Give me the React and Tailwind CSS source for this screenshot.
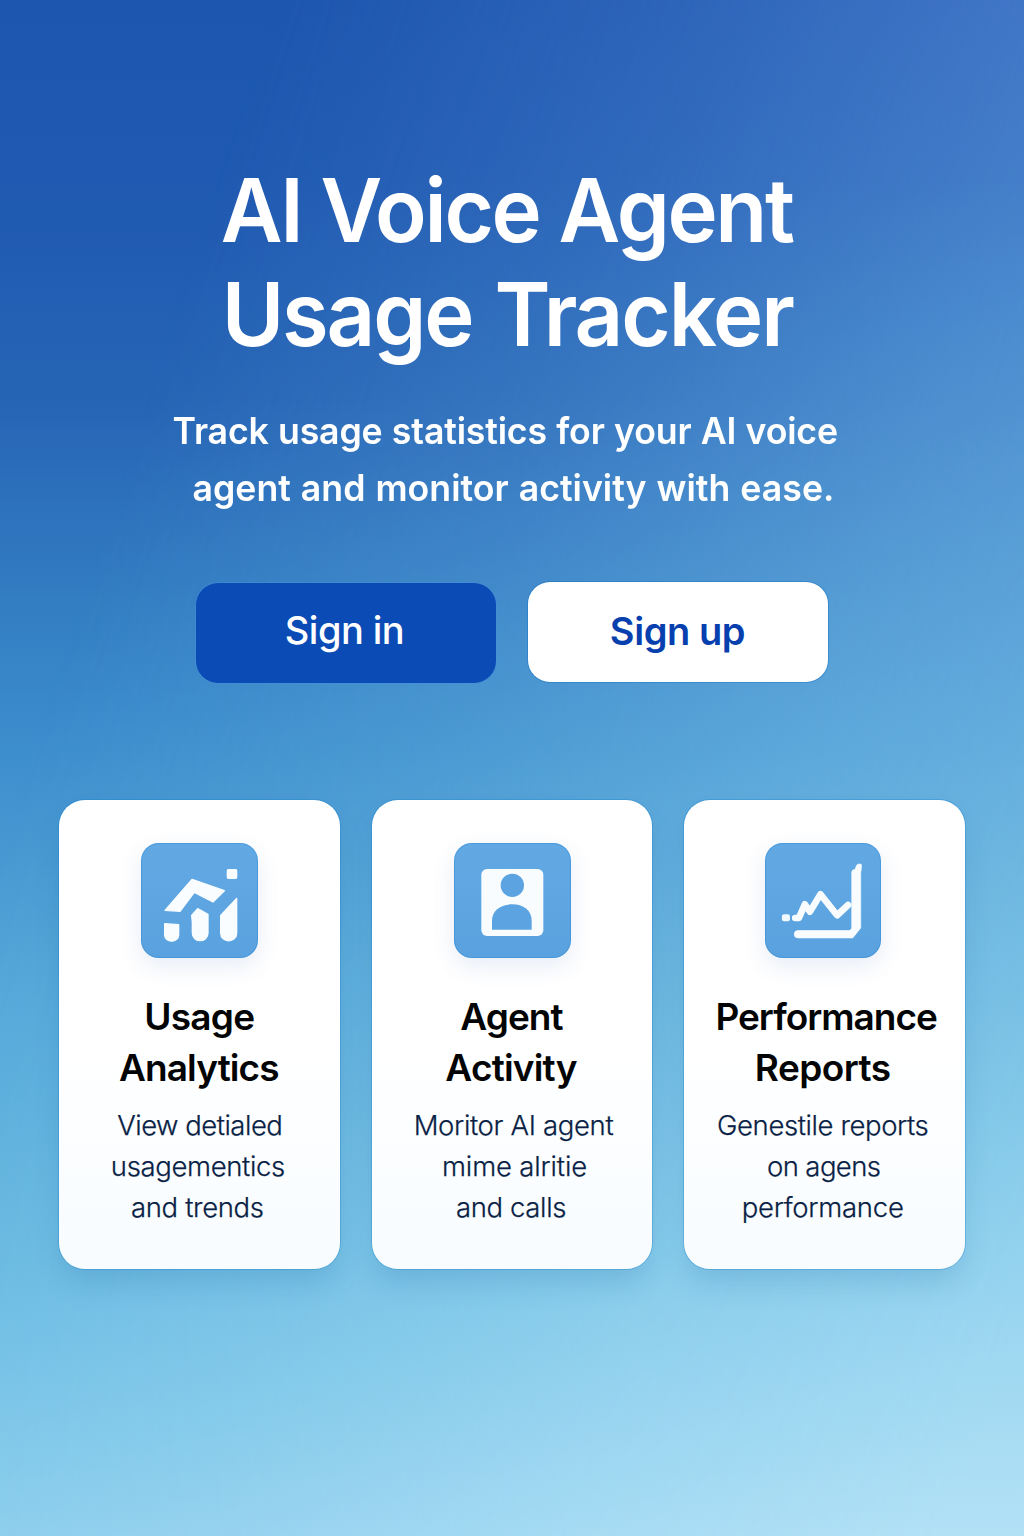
import React from "react";

function AnalyticsIcon() {
  return (
    <svg viewBox="34 33 351 345" className="h-full w-full" fill="#fafdff" stroke="#fafdff" strokeLinejoin="round" strokeWidth="4">
      <path d="M187 142 L284 176 L250 210 L194 181 L151 238 L106 235 Z" />
      <rect x="293" y="113" width="28" height="26" rx="3" />
      <path d="M105 275 L147 278 V308 C147 334 105 334 105 308 Z" />
      <path d="M204 230 L235 247 V302 C235 334 188 334 188 302 V270 L186 250 Z" />
      <path d="M321 199 V303 C321 334 273 334 273 303 V250 Z" />
    </svg>
  );
}

function AgentIcon() {
  return (
    <svg viewBox="34 33 351 345" className="h-full w-full">
      <rect x="116" y="111" width="186" height="201" rx="17" fill="#f8fcff" />
      <circle cx="209" cy="160" r="35" fill="#5ba4e1" />
      <path d="M148 293 V266 C148 235 174 217 208 217 C242 217 267 235 267 266 V293 Z" fill="#5ba4e1" />
    </svg>
  );
}

function ReportsIcon() {
  return (
    <svg viewBox="35 33 349 345" className="h-full w-full">
      <rect x="86" y="247" width="24" height="21" rx="6" fill="#f2f9ff" />
      <path d="M126 258 H137 L155 217 L170 239 L202 187 L252 250 L285 219" fill="none" stroke="#f8fcff" strokeWidth="20" strokeLinecap="round" strokeLinejoin="round" />
      <path d="M296 120 Q297 112 306 112 L311 99 Q318 93 325 97 V106 Q325 112 323 120 V288 L299 318 H134 Q123 318 123 307 Q123 296 134 296 H290 L296 289 Z" fill="#f8fcff" stroke="#f8fcff" strokeWidth="2" />
    </svg>
  );
}

const CARDS = [
  {
    Icon: AnalyticsIcon,
    tile: "ml-[82px] w-[117px]",
    title: [
      ["Usage", "tracking-[-0.73px]"],
      ["Analytics", "tracking-[-0.93px] pr-[1px]"],
    ],
    body: [
      ["View detialed", "tracking-[-0.5px] pl-[1px]"],
      ["usagementics", "tracking-[-0.36px] pr-[3px]"],
      ["and trends", "tracking-[-0.33px] pr-[4px]"],
    ],
  },
  {
    Icon: AgentIcon,
    tile: "ml-[82px] w-[117px]",
    title: [
      ["Agent", "tracking-[-0.95px] pr-[1px]"],
      ["Activity", "tracking-[-0.8px] pr-[2px]"],
    ],
    body: [
      ["Moritor AI agent", "tracking-[-0.34px] pl-[3px]"],
      ["mime alritie", "tracking-[-0.15px] pl-[5px]"],
      ["and calls", "tracking-[-0.35px] pr-[2px]"],
    ],
  },
  {
    Icon: ReportsIcon,
    tile: "ml-[80.67px] w-[116px]",
    title: [
      ["Performance", "tracking-[-1.0px] pl-[3px]"],
      ["Reports", "tracking-[-0.55px] pr-[4px]"],
    ],
    body: [
      ["Genestile reports", "tracking-[-0.4px] pr-[4px]"],
      ["on agens", "tracking-[-0.6px] pr-[2px]"],
      ["performance", "tracking-[-0.25px] pr-[4px]"],
    ],
  },
];

function Card({ Icon, tile, title, body }) {
  return (
    <article className="h-[469px] rounded-[26px] bg-gradient-to-b from-white from-50% to-[#f8fcff] pt-[43px] text-center whitespace-nowrap shadow-[0_0_0_1px_rgba(20,125,200,0.3),0_16px_28px_-4px_rgba(25,100,160,0.2)]">
      <div className={`h-[115px] rounded-[18px] bg-gradient-to-b from-[#62a9e4] to-[#5aa2df] shadow-[inset_0_0_0_1px_rgba(40,135,210,0.4),0_8px_22px_rgba(70,110,190,0.13)] ${tile}`}>
        <Icon />
      </div>
      <h2 className="mt-[32.5px] text-[37px] leading-[51px] font-semibold text-[#030405]">
        {title.map(([text, fit]) => (
          <span key={text} className={`block ${fit}`}>{text}</span>
        ))}
      </h2>
      <p className="mt-[12px] text-[27.5px] leading-[41px] font-light text-[#0a1f45] [-webkit-text-stroke:0.25px_#0a1f45]">
        {body.map(([text, fit]) => (
          <span key={text} className={`block ${fit}`}>{text}</span>
        ))}
      </p>
    </article>
  );
}

export default function App() {
  return (
    <div className="relative isolate h-[1536px] w-[1024px] overflow-hidden bg-[linear-gradient(180deg,#1d56af_0px,#1f59b1_180px,#2664b5_400px,#3078c0_560px,#3d8ecd_750px,#55a8d9_1000px,#67b8e1_1250px,#73c1e6_1380px,#87cbec_1536px)] font-['Inter',sans-serif]">
      <div className="absolute inset-0 -z-10 bg-[linear-gradient(180deg,#5286d1_0px,#528cd3_180px,#5a9cd8_350px,#62a8dc_550px,#6ab3e0_750px,#7bc2e5_1000px,#93d2ee_1250px,#a3daf2_1400px,#b2e1f6_1536px)] [mask-image:linear-gradient(108deg,transparent_18%,rgba(0,0,0,0.32)_45%,rgba(0,0,0,0.72)_70%,black_95%)]" />

      <h1 className="pt-[158px] text-center text-[88.5px] leading-[103.5px] font-semibold whitespace-nowrap text-white">
        <span className="block origin-center scale-x-[0.96] pr-[11px] tracking-[-2.45px]">AI Voice Agent</span>
        <span className="block origin-center scale-x-[0.96] pr-[10px] tracking-[-2.2px] [word-spacing:3px]">Usage Tracker</span>
      </h1>

      <p className="mt-[37px] text-center text-[37px] leading-[57px] font-semibold whitespace-nowrap text-white">
        <span className="block origin-center scale-x-[0.965] pr-[14px] tracking-[-0.18px] [word-spacing:0.5px]">Track usage statistics for your AI voice</span>
        <span className="block origin-center scale-x-[0.965] pl-[3px] tracking-[0px] [word-spacing:1px]">agent and monitor activity with ease.</span>
      </p>

      <div className="mt-[66px] flex items-start justify-center gap-8 text-[38px]">
        <button className="mt-px h-[100px] w-[300px] rounded-[22px] bg-[#0b4bb6] pr-[3px] pb-[5px] font-medium tracking-[-0.54px] text-white shadow-[0_0_0_1px_rgba(65,145,215,0.5)]">
          Sign in
        </button>
        <button className="h-[100px] w-[300px] rounded-[22px] bg-white pr-px pb-[1px] font-semibold tracking-[-0.42px] text-[#073fae] shadow-[0_0_0_1px_rgba(20,110,195,0.4)]">
          Sign up
        </button>
      </div>

      <div className="mx-[59px] mt-[117px] grid grid-cols-3 gap-8">
        {CARDS.map((card) => (
          <Card key={card.title[0][0]} {...card} />
        ))}
      </div>
    </div>
  );
}
